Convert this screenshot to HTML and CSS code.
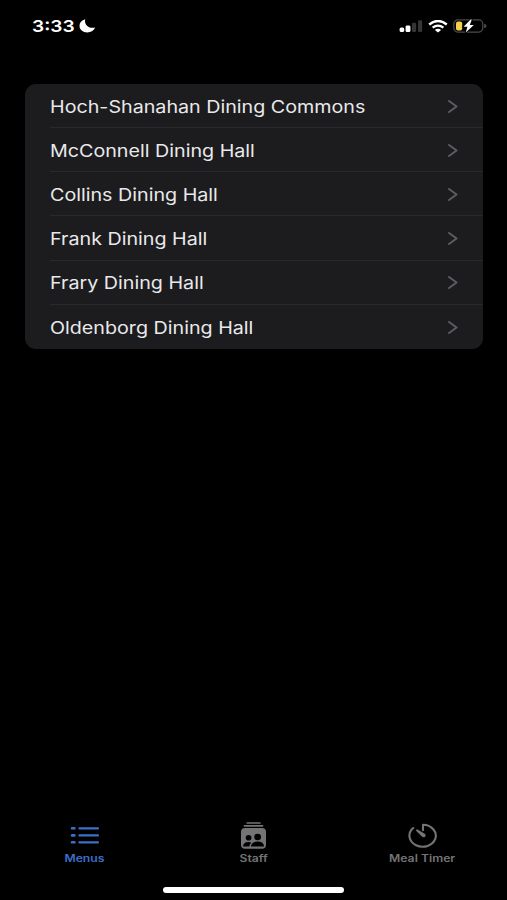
FILE: index.html
```html
<!DOCTYPE html>
<html lang="en">
<head>
    <meta charset="UTF-8">
    <meta name="viewport" content="width=device-width, initial-scale=1.0">
    <title>Dining Menus</title>
    <link rel="stylesheet" href="styles.css">
</head>
<body>
    <header class="status-bar">
        <div class="status-left">
            <span class="time">3:33</span>
            <svg class="moon" width="17" height="14" viewBox="0 0 17 14">
                <path d="M6.2 0.3C5 5.8 9.4 10 16.2 8.6C14.6 12 11.6 13.5 8.4 13.5C3.8 13.5 0.5 10.6 0.5 6.8C0.5 3.8 2.6 1.2 6.2 0.3Z" fill="#fff"/>
            </svg>
        </div>
        <div class="status-right">
            <svg width="24" height="13" viewBox="0 0 24 13">
                <rect x="0.6" y="7.4" width="4.6" height="4.7" rx="1.6" fill="#fff"/>
                <rect x="6.6" y="5.4" width="4.8" height="6.7" rx="1.4" fill="#fff"/>
                <rect x="13" y="2.8" width="4.2" height="9.3" rx="1.3" fill="#353535"/>
                <rect x="19" y="0.2" width="4.2" height="11.9" rx="1.3" fill="#353535"/>
            </svg>
            <svg class="wifi" width="20" height="13" viewBox="0 0 20 13">
                <path d="M1.2 4.5Q10 -2.6 18.8 4.5" fill="none" stroke="#fff" stroke-width="2.3"/>
                <path d="M4.6 7.6Q10 3.5 15.4 7.6" fill="none" stroke="#fff" stroke-width="2.2"/>
                <path d="M6.9 10Q10 7.5 13.1 10L10 12.6Z" fill="#fff"/>
            </svg>
            <svg class="battery" width="34" height="14" viewBox="0 0 34 14">
                <rect x="0.8" y="0.9" width="29" height="12.2" rx="4" fill="none" stroke="#4b4b4b" stroke-width="1.2"/>
                <path d="M31.2 4.8Q33.6 5.2 33.6 7T31.2 9.2Z" fill="#4b4b4b"/>
                <rect x="3" y="2.5" width="6.2" height="9" rx="2" fill="#f7d04a"/>
                <path d="M17.6 0.6L10.6 7.7H14.4L12.8 13.4L20.8 6.1H16.8L18.8 0.6Z" fill="#fff" stroke="#000" stroke-width="1.6" paint-order="stroke"/>
            </svg>
        </div>
    </header>

    <main>
        <ul class="hall-list">
            <li class="hall">
                <span class="hall-name">Hoch-Shanahan Dining Commons</span>
                <svg class="chevron" viewBox="0 0 10 13"><path d="M1 1L8.6 6.5L1 12"/></svg>
            </li>
            <li class="hall">
                <span class="hall-name">McConnell Dining Hall</span>
                <svg class="chevron" viewBox="0 0 10 13"><path d="M1 1L8.6 6.5L1 12"/></svg>
            </li>
            <li class="hall">
                <span class="hall-name">Collins Dining Hall</span>
                <svg class="chevron" viewBox="0 0 10 13"><path d="M1 1L8.6 6.5L1 12"/></svg>
            </li>
            <li class="hall">
                <span class="hall-name">Frank Dining Hall</span>
                <svg class="chevron" viewBox="0 0 10 13"><path d="M1 1L8.6 6.5L1 12"/></svg>
            </li>
            <li class="hall">
                <span class="hall-name">Frary Dining Hall</span>
                <svg class="chevron" viewBox="0 0 10 13"><path d="M1 1L8.6 6.5L1 12"/></svg>
            </li>
            <li class="hall">
                <span class="hall-name">Oldenborg Dining Hall</span>
                <svg class="chevron" viewBox="0 0 10 13"><path d="M1 1L8.6 6.5L1 12"/></svg>
            </li>
        </ul>
    </main>

    <nav class="tab-bar">
        <div class="tab active">
            <svg width="30" height="28" viewBox="0 0 30 28">
                <g fill="currentColor">
                    <rect x="0.8" y="5" width="4.8" height="2.6" rx="1.2"/>
                    <rect x="8.4" y="5.2" width="20.6" height="2.2" rx="1"/>
                    <rect x="0.8" y="12.1" width="4.8" height="2.6" rx="1.2"/>
                    <rect x="8.4" y="12.3" width="20.6" height="2.2" rx="1"/>
                    <rect x="0.8" y="19" width="4.8" height="2.6" rx="1.2"/>
                    <rect x="8.4" y="19.2" width="20.6" height="2.2" rx="1"/>
                </g>
            </svg>
            <span class="tab-label">Menus</span>
        </div>
        <div class="tab">
            <svg width="30" height="28" viewBox="0 0 30 28">
                <rect x="7.4" y="0.2" width="14.4" height="1.5" rx="0.7" fill="currentColor"/>
                <rect x="4.6" y="2.9" width="19.8" height="1.8" rx="0.9" fill="currentColor"/>
                <rect x="2" y="6" width="25" height="20.8" rx="4" fill="currentColor"/>
                <g fill="#000">
                    <ellipse cx="9.6" cy="15.8" rx="2.9" ry="2.8"/>
                    <path d="M4 24.4Q4.4 20 9.6 20Q11.4 20 12.2 20.7Q10.4 22.2 10.4 24.4Z"/>
                    <ellipse cx="18.6" cy="15" rx="3.4" ry="3.3"/>
                    <path d="M12 24.4Q12.4 19.6 18.6 19.6T25 24.4Z"/>
                </g>
            </svg>
            <span class="tab-label">Staff</span>
        </div>
        <div class="tab">
            <svg width="30" height="28" viewBox="0 0 30 28">
                <path d="M5.2 6A13.2 11 0 1 0 15 2.7V8.2" fill="none" stroke="currentColor" stroke-width="2.1" stroke-linecap="round" stroke-linejoin="round"/>
                <path d="M8.2 7.8Q8.8 7.2 9.6 7.6L16.8 11.8Q18.6 13.4 17.1 14.8Q15.4 16 13.8 14.5L8.3 9Q7.7 8.4 8.2 7.8Z" fill="currentColor"/>
            </svg>
            <span class="tab-label">Meal Timer</span>
        </div>
    </nav>
    <div class="home-indicator"></div>
</body>
</html>
```

FILE: styles.css
```css
* {
    box-sizing: border-box;
}
body {
    margin: 0;
    height: 900px;
    display: flex;
    flex-direction: column;
    background-color: #000;
    color: #e9e9eb;
    font-family: Inter, "Liberation Sans", sans-serif;
    overflow: hidden;
}
.status-bar {
    display: flex;
    justify-content: space-between;
    height: 84px;
    padding: 16px 20px 0 32px;
}
.status-left, .status-right {
    display: flex;
    align-items: center;
    height: 20px;
}
.time {
    width: 47px;
    font-size: 16.5px;
    font-weight: 600;
    line-height: 20px;
    color: #fff;
    transform: scaleX(1.16);
    transform-origin: left;
}
.wifi {
    margin-left: 5px;
}
.battery {
    margin-left: 5px;
}
main {
    flex: 1;
    padding: 0 24px 0 25px;
}
.hall-list {
    list-style: none;
    margin: 0;
    padding: 0;
    background-color: #1c1c1e;
    border-radius: 11px;
    overflow: hidden;
}
.hall {
    display: flex;
    justify-content: space-between;
    align-items: center;
    height: 44.17px;
    margin-left: 25px;
    padding: 1px 25px 0 0;
    border-bottom: 1px solid #29292b;
}
.hall:last-child {
    border-bottom: none;
}
/* wide letterforms */
.hall-name {
    font-size: 17px;
    line-height: 22px;
    padding-top: 1px;
    white-space: nowrap;
    transform: scaleX(1.158);
    transform-origin: left;
}
.chevron {
    width: 10px;
    height: 13px;
    fill: none;
    stroke: #5c5c60;
    stroke-width: 2;
    stroke-linecap: round;
    stroke-linejoin: round;
}
.tab-bar {
    display: flex;
    height: 65px;
}
.tab {
    flex: 1;
    display: flex;
    flex-direction: column;
    align-items: center;
    color: #747476;
}
.tab.active {
    color: #3b70c8;
}
.tab-label {
    margin-top: 2px;
    font-size: 10px;
    font-weight: 600;
    line-height: 13px;
    transform: scaleX(1.22);
}
.home-indicator {
    align-self: center;
    width: 181px;
    height: 6px;
    margin-bottom: 7px;
    border-radius: 3px;
    background-color: #fff;
}
```
